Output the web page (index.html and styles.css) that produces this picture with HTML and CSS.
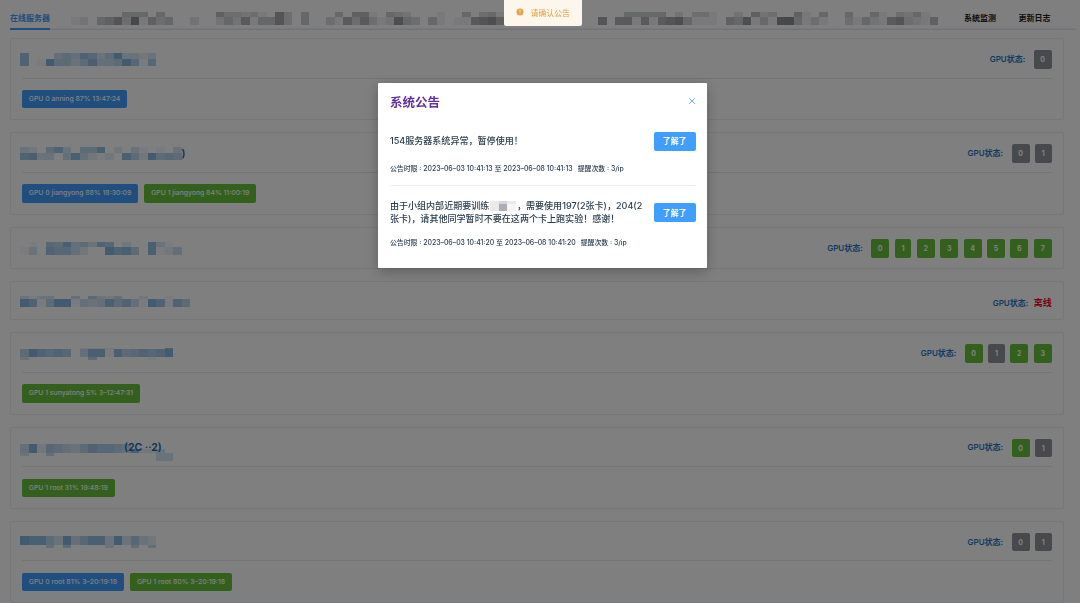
FILE: index.html
```html
<!DOCTYPE html>
<html lang="zh-CN">
<head>
  <meta charset="UTF-8" />
  <meta name="viewport" content="width=device-width, initial-scale=1.0" />
  <title>GPU</title>
  <link rel="stylesheet" href="styles.css">
</head>
<body>
  <div class="page">
    <div class="tabs">
      <div class="tab active">在线服务器</div>
      <div class="mosaic gray" data-rows="5:......444.4......533231.73.4...4.551.432...1..4.341..............44444.2.331..2.523..51.4..4..41.3241|8:12.457391534..2..242614473.4..31636312843.41.116785...........7.661616784111.548141994131..31421673215"></div>
      <div class="tab">系统监测</div>
      <div class="tab">更新日志</div>
    </div>

    <div class="card">
      <div class="card-header">
        <div class="mosaic" data-rows="6.6:7...454763593323|6.6:7.19553584459616"></div>
        <div class="status"><span class="label">GPU状态:</span><span class="badge gray">0</span></div>
      </div>
      <div class="tags"><span class="tag blue">GPU 0 anning 87% 13:47:24</span></div>
    </div>

    <div class="card">
      <div class="card-header">
        <div class="mosaic" data-rows="6:32.573.558.2.31.1.3|7.5:7833.484212.8529565"></div><span class="title">)</span>
        <div class="status"><span class="label">GPU状态:</span><span class="badge gray">0</span><span class="badge narrow gray">1</span></div>
      </div>
      <div class="tags"><span class="tag blue">GPU 0 jiangyong 88% 18:30:09</span><span class="tag green">GPU 1 jiangyong 84% 11:00:19</span></div>
    </div>

    <div class="card idle">
      <div class="card-header">
        <div class="mosaic" data-rows="5.5:.1.65845376.2..831.|7.5:13.76642..9785.8124"></div>
        <div class="status"><span class="label">GPU状态:</span><span class="badge green">0</span><span class="badge narrow green">1</span><span class="badge green">2</span><span class="badge green">3</span><span class="badge green">4</span><span class="badge green">5</span><span class="badge green">6</span><span class="badge green">7</span></div>
      </div>
    </div>

    <div class="card offline">
      <div class="card-header">
        <div class="mosaic" data-rows="2.5:3133..4.5324..2..1..|8.5:97159914348574197175"></div>
        <div class="status"><span class="label">GPU状态:</span><span class="down">离线</span></div>
      </div>
    </div>

    <div class="card">
      <div class="card-header">
        <div class="mosaic" data-rows="1:.......2222......8|8.7:597676.48818567679|2.5:3.......5......1.."></div>
        <div class="status"><span class="label">GPU状态:</span><span class="badge green">0</span><span class="badge narrow gray">1</span><span class="badge green">2</span><span class="badge green">3</span></div>
      </div>
      <div class="tags"><span class="tag green">GPU 1 sunyatong 5% 3–12:47:31</span></div>
    </div>

    <div class="card">
      <div class="card-header">
        <div class="mosaic low" data-rows="4.5:4926543576654....|4.3:49265435766548223.|3:3..4............33|5:................33"></div><span class="title over">(2C ··2)</span>
        <div class="status"><span class="label">GPU状态:</span><span class="badge green">0</span><span class="badge narrow gray">1</span></div>
      </div>
      <div class="tags"><span class="tag green">GPU 1 root 31% 19:48:19</span></div>
    </div>

    <div class="card">
      <div class="card-header">
        <div class="mosaic" data-rows="8.8:9885394688393632|3.5:...4.5....3..4.4"></div>
        <div class="status"><span class="label">GPU状态:</span><span class="badge gray">0</span><span class="badge narrow gray">1</span></div>
      </div>
      <div class="tags"><span class="tag blue">GPU 0 root 81% 3–20:19:18</span><span class="tag green">GPU 1 root 80% 3–20:19:18</span></div>
    </div>
  </div>

  <div class="overlay">
    <div class="dialog">
      <div class="dialog-header">
        <h1>系统公告</h1>
        <svg class="close" viewBox="0 0 8 8"><path d="M1.2 1.2l5.6 5.6M6.8 1.2l-5.6 5.6" /></svg>
      </div>
      <div class="notice">
        <div class="notice-main">
          <p>154服务器系统异常，暂停使用！</p>
          <button>了解了</button>
        </div>
        <div class="meta"><span>公告时限 : 2023–06–03 10:41:13 至 2023–06–08 10:41:13</span><span>提醒次数 : 3/ip</span></div>
      </div>
      <div class="notice">
        <div class="notice-main">
          <p>由于小组内部近期要训练<span class="mosaic gray" data-rows="3:242|7:281"></span>，需要使用197(2张卡)，204(2<br>张卡)，请其他同学暂时不要在这两个卡上跑实验！感谢！</p>
          <button>了解了</button>
        </div>
        <div class="meta"><span>公告时限 : 2023–06–03 10:41:20 至 2023–06–08 10:41:20</span><span>提醒次数 : 3/ip</span></div>
      </div>
    </div>
  </div>

  <div class="message">
    <svg viewBox="0 0 10 10"><circle cx="5" cy="5" r="5" /><path d="M5 2.2v3.4M5 6.9v1" /></svg>
    <span>请确认公告</span>
  </div>

  <script src="mosaic.js"></script>
</body>
</html>
```

FILE: styles.css
```css
* {
  box-sizing: border-box;
}
body {
  margin: 0;
  height: 603px;
  overflow: hidden;
  background: #fff;
  font-family: Inter, "Noto Sans CJK SC", sans-serif;
  color: #2c3e50;
}
.page {
  padding: 0 16.5px 0 10px;
}
.tabs {
  display: flex;
  align-items: center;
  height: 30px;
  margin: 0 -12.5px 8px 0;
  padding-top: 7px;
  box-shadow: inset 0 -1.5px #e4e7ed;
  font-size: 8px;
  font-weight: 700;
  color: #222;
}
.tab {
  height: 23px;
  line-height: 22px;
  white-space: nowrap;
}
.tab.active {
  color: #409eff;
  border-bottom: 2px solid #409eff;
  margin-right: 21px;
}
.tab + .tab {
  margin-left: 22.5px;
}
.tabs .mosaic {
  margin: -1px 26px 0 0;
}
.mosaic {
  display: flex;
  flex-direction: column;
  color: #1e78c8;
}
.mosaic.gray {
  color: #303133;
}
.mosaic-row {
  display: flex;
}
.mosaic-row i {
  width: 8.5px;
  background: currentColor;
}
.card {
  height: 82.3px;
  margin-bottom: 12px;
  padding: 0 10.8px;
  border: 1px solid #ebeef5;
  border-radius: 2px;
}
.card-header {
  display: flex;
  align-items: center;
  height: 39.5px;
  padding-top: 2px;
  border-bottom: 1px solid #e6e8ec;
}
.card-header .mosaic {
  margin-left: -1.8px;
}
.card-header .mosaic.low {
  margin-top: 9px;
}
.idle {
  height: 42.8px;
}
.offline {
  height: 39px;
}
.idle .card-header,
.offline .card-header {
  border: 0;
}
.offline .mosaic {
  margin-top: -3px;
}
.title {
  color: #0d66b5;
  font-size: 10.5px;
  font-weight: 600;
}
.title.over {
  margin: -1px 0 0 -49px;
  font-size: 10.5px;
  white-space: nowrap;
}
.status {
  display: flex;
  align-items: center;
  gap: 5.4px;
  margin-left: auto;
}
.label {
  margin-top: -2px;
  color: #1e78c8;
  font-size: 8px;
  font-weight: 600;
}
.label + .badge {
  margin-left: 3px;
}
.badge {
  width: 18px;
  height: 18.5px;
  border-radius: 2px;
  color: #fff;
  font-size: 7px;
  font-weight: 700;
  line-height: 19px;
  text-align: center;
}
.badge.narrow {
  width: 16.8px;
}
.badge.gray {
  background: #909399;
}
.green {
  background: #67c23a;
}
.blue {
  background: #409eff;
}
.down {
  margin-top: -2px;
  color: #f00014;
  font-size: 9px;
  font-weight: 700;
}
.tags {
  display: flex;
  gap: 6px;
  padding-top: 11.5px;
}
.tag {
  height: 18.4px;
  padding: 0 7px;
  border-radius: 2px;
  color: #fff;
  font-size: 6.85px;
  font-weight: 500;
  line-height: 18.5px;
  white-space: nowrap;
}
.overlay {
  position: fixed;
  inset: 0;
  background: rgba(0, 0, 0, 0.5);
}
.dialog {
  width: 329px;
  height: 184.5px;
  margin: 83px 0 0 378.4px;
  padding: 0 11.3px 0 11.5px;
  border-radius: 1px;
  background: #fff;
  box-shadow: 0 4px 14px rgba(0, 0, 0, 0.25);
}
.dialog-header {
  display: flex;
  align-items: center;
  justify-content: space-between;
  height: 37px;
}
.dialog h1 {
  margin: 0;
  color: #6030a0;
  font-size: 12.5px;
}
.close {
  width: 8px;
  height: 8px;
  margin-top: -1px;
  fill: none;
  stroke: #409eff;
  stroke-width: 0.8;
}
.notice {
  height: 65px;
  padding-top: 12px;
}
.notice + .notice {
  border-top: 1px solid #ebeef5;
  padding-top: 14px;
}
.notice-main {
  display: flex;
  align-items: center;
  justify-content: space-between;
}
.notice p {
  margin: 0;
  font-size: 9.05px;
  font-weight: 500;
  line-height: 12.7px;
  white-space: nowrap;
}
.notice .mosaic {
  display: inline-flex;
  height: 10px;
  margin: 1px 1px 0;
  color: #556;
  vertical-align: top;
}
.notice button {
  width: 42.5px;
  height: 18.5px;
  padding: 0;
  border: 0;
  border-radius: 2px;
  background: #409eff;
  color: #fff;
  font: 700 8px/18px Inter, "Noto Sans CJK SC", sans-serif;
}
.meta {
  display: flex;
  gap: 5px;
  padding-top: 12px;
  font-size: 6.9px;
  font-weight: 500;
  line-height: 11px;
  white-space: nowrap;
}
.message {
  position: fixed;
  top: 0;
  left: 504px;
  display: flex;
  align-items: center;
  gap: 6.5px;
  width: 78px;
  height: 25.6px;
  padding: 0 0 1px 12px;
  border-radius: 0 0 2px 2px;
  background: #fdf6ec;
  color: #e6a23c;
  font-size: 7.9px;
}
.message svg {
  width: 8px;
  height: 8px;
  fill: #e6a23c;
  stroke: #fdf6ec;
}
```

FILE: mosaic.js
```js
// data-rows is "height:cells|height:cells", each cell is a shade 1-9 or "." for none
document.querySelectorAll('.mosaic').forEach(function (el) {
  el.dataset.rows.split('|').forEach(function (part) {
    const [height, cells] = part.split(':');
    const row = document.createElement('span');
    row.className = 'mosaic-row';
    row.style.height = height + 'px';
    for (const c of cells) {
      const cell = document.createElement('i');
      cell.style.opacity = c === '.' ? 0 : c * 0.06;
      row.appendChild(cell);
    }
    el.appendChild(row);
  });
});
```
